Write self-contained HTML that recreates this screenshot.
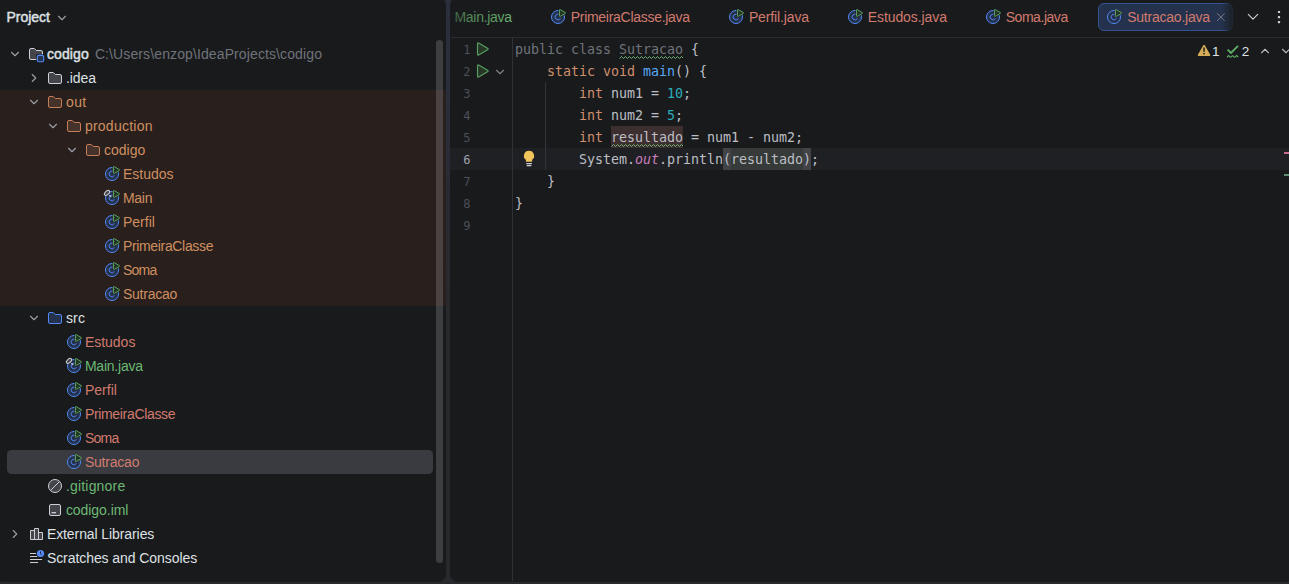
<!DOCTYPE html><html><head><meta charset="utf-8"><title>codigo – Sutracao.java</title><style>

html,body{margin:0;padding:0;background:#27292d;overflow:hidden}
body{width:1289px;height:584px;position:relative;font-family:"Liberation Sans", sans-serif;}
#frame{position:absolute;left:0;top:0;width:1289px;height:584px;overflow:hidden;background:linear-gradient(180deg,#2b2f3e 0px,#2a2e3b 100px,#282a31 220px,#27292d 300px,#27292d 100%)}
.panel{position:absolute;background:#191a1c;border-radius:8px}
.ic{position:absolute;overflow:visible}
.t{position:absolute;white-space:pre;line-height:0;height:0;}
.ui{font-family:"Liberation Sans", sans-serif;font-size:14px;}
.b{font-weight:normal;font-size:14px;-webkit-text-stroke:0.45px currentColor}
.mono{font-family:"DejaVu Sans Mono", "Liberation Mono", monospace;font-size:13.33px;letter-spacing:-0.025px}
.abs{position:absolute}

</style></head><body><div id="frame">
<div class="panel" id="left" style="left:-4px;top:-3px;width:450px;height:584.5px"></div>
<div class="panel" id="editor" style="left:450px;top:-3px;width:843px;height:584.5px"></div>
<div class="abs" style="left:0;top:90px;width:446px;height:216px;background:#291f1d"></div>
<div class="abs" style="left:7px;top:450px;width:426px;height:24px;border-radius:4.5px;background:#393b40"></div>
<div class="abs" style="left:436px;top:40px;width:7px;height:523px;border-radius:3.5px;background:rgba(255,255,255,0.16)"></div>
<span class="t ui b" id="t1" style="left:6.4px;top:17.15px;color:#dfe1e5;letter-spacing:0.003px;">Project</span>
<svg class="ic" style="left:54px;top:9.5px" width="16" height="16" viewBox="0 0 16 16"><path d="M4.5 6.25 L8 9.75 L11.5 6.25" fill="none" stroke="#9da0a8" stroke-width="1.1" stroke-linecap="round" stroke-linejoin="round"/></svg>
<svg class="ic" style="left:7px;top:46px" width="16" height="16" viewBox="0 0 16 16"><path d="M4.5 6.25 L8 9.75 L11.5 6.25" fill="none" stroke="#9da0a8" stroke-width="1.1" stroke-linecap="round" stroke-linejoin="round"/></svg><svg class="ic" style="left:28px;top:46px" width="18" height="18" viewBox="0 0 18 18"><path d="M8.1 4.35 L8.25 4.5 H13 A1.5 1.5 0 0 1 14.5 6 V12 A1.5 1.5 0 0 1 13 13.5 H3 A1.5 1.5 0 0 1 1.5 12 V4 A1.5 1.5 0 0 1 3 2.5 H6.1 Q6.3 2.5 6.48 2.65 Z" fill="#43454a" stroke="#ced0d6"/><rect x="8.2" y="8.3" width="9" height="9" fill="#191a1c"/><rect x="9.3" y="9.4" width="6.4" height="6.4" rx="1.6" fill="#25324d" stroke="#548af7" stroke-width="1.1"/></svg><span class="t ui b" id="t2" style="left:46.9px;top:54.15px;color:#dfe1e5;letter-spacing:0.117px;">codigo</span>
<span class="t ui" id="t3" style="left:94.9px;top:54.15px;color:#6f737a;letter-spacing:0.112px;">C:\Users\enzop\IdeaProjects\codigo</span>
<svg class="ic" style="left:26px;top:70px" width="16" height="16" viewBox="0 0 16 16"><path d="M6.25 4.5 L9.75 8 L6.25 11.5" fill="none" stroke="#9da0a8" stroke-width="1.1" stroke-linecap="round" stroke-linejoin="round"/></svg><svg class="ic" style="left:47px;top:70px" width="16" height="16" viewBox="0 0 16 16"><path d="M8.1 4.35 L8.25 4.5 H13 A1.5 1.5 0 0 1 14.5 6 V12 A1.5 1.5 0 0 1 13 13.5 H3 A1.5 1.5 0 0 1 1.5 12 V4 A1.5 1.5 0 0 1 3 2.5 H6.1 Q6.3 2.5 6.48 2.65 Z" fill="#43454a" stroke="#ced0d6"/></svg><span class="t ui" id="t4" style="left:65.9px;top:78.15px;color:#dfe1e5;letter-spacing:-0.06px;">.idea</span>
<svg class="ic" style="left:26px;top:94px" width="16" height="16" viewBox="0 0 16 16"><path d="M4.5 6.25 L8 9.75 L11.5 6.25" fill="none" stroke="#9da0a8" stroke-width="1.1" stroke-linecap="round" stroke-linejoin="round"/></svg><svg class="ic" style="left:47px;top:94px" width="16" height="16" viewBox="0 0 16 16"><path d="M8.1 4.35 L8.25 4.5 H13 A1.5 1.5 0 0 1 14.5 6 V12 A1.5 1.5 0 0 1 13 13.5 H3 A1.5 1.5 0 0 1 1.5 12 V4 A1.5 1.5 0 0 1 3 2.5 H6.1 Q6.3 2.5 6.48 2.65 Z" fill="#45322b" stroke="#c77d55"/></svg><span class="t ui" id="t5" style="left:65.9px;top:102.15px;color:#cf8f60;letter-spacing:0.455px;">out</span>
<svg class="ic" style="left:45px;top:118px" width="16" height="16" viewBox="0 0 16 16"><path d="M4.5 6.25 L8 9.75 L11.5 6.25" fill="none" stroke="#9da0a8" stroke-width="1.1" stroke-linecap="round" stroke-linejoin="round"/></svg><svg class="ic" style="left:66px;top:118px" width="16" height="16" viewBox="0 0 16 16"><path d="M8.1 4.35 L8.25 4.5 H13 A1.5 1.5 0 0 1 14.5 6 V12 A1.5 1.5 0 0 1 13 13.5 H3 A1.5 1.5 0 0 1 1.5 12 V4 A1.5 1.5 0 0 1 3 2.5 H6.1 Q6.3 2.5 6.48 2.65 Z" fill="#45322b" stroke="#c77d55"/></svg><span class="t ui" id="t6" style="left:84.9px;top:126.15px;color:#cf8f60;letter-spacing:0.244px;">production</span>
<svg class="ic" style="left:64px;top:142px" width="16" height="16" viewBox="0 0 16 16"><path d="M4.5 6.25 L8 9.75 L11.5 6.25" fill="none" stroke="#9da0a8" stroke-width="1.1" stroke-linecap="round" stroke-linejoin="round"/></svg><svg class="ic" style="left:85px;top:142px" width="16" height="16" viewBox="0 0 16 16"><path d="M8.1 4.35 L8.25 4.5 H13 A1.5 1.5 0 0 1 14.5 6 V12 A1.5 1.5 0 0 1 13 13.5 H3 A1.5 1.5 0 0 1 1.5 12 V4 A1.5 1.5 0 0 1 3 2.5 H6.1 Q6.3 2.5 6.48 2.65 Z" fill="#45322b" stroke="#c77d55"/></svg><span class="t ui" id="t7" style="left:103.9px;top:150.15px;color:#cf8f60;letter-spacing:0.044px;">codigo</span>
<svg class="ic" style="left:102px;top:164px" width="20" height="20" viewBox="-2 -2 20 20"><circle cx="8" cy="8" r="6.5" fill="#25324d" stroke="#548af7"/><path d="M10.2 9.8 A2.85 2.85 0 1 1 10.2 6.2" fill="none" stroke="#548af7" stroke-width="0.9" stroke-linecap="round"/><path d="M9.5 1.1 Q9.5 0.2 10.3 0.65 L15.35 3.55 Q16.1 4 15.35 4.45 L10.3 7.35 Q9.5 7.8 9.5 6.9 Z" fill="#291f1d" stroke="#291f1d" stroke-width="1.9" stroke-linejoin="round"/><path d="M9.5 1.1 Q9.5 0.2 10.3 0.65 L15.35 3.55 Q16.1 4 15.35 4.45 L10.3 7.35 Q9.5 7.8 9.5 6.9 Z" fill="#253627" stroke="#5a9e60" stroke-width="1" stroke-linejoin="round"/></svg><span class="t ui" id="t8" style="left:122.9px;top:174.15px;color:#cf8f60;letter-spacing:0.015px;">Estudos</span>
<svg class="ic" style="left:102px;top:188px" width="20" height="20" viewBox="-2 -2 20 20"><circle cx="8" cy="8" r="6.5" fill="#25324d" stroke="#548af7"/><path d="M10.2 9.8 A2.85 2.85 0 1 1 10.2 6.2" fill="none" stroke="#548af7" stroke-width="0.9" stroke-linecap="round"/><path d="M9.5 1.1 Q9.5 0.2 10.3 0.65 L15.35 3.55 Q16.1 4 15.35 4.45 L10.3 7.35 Q9.5 7.8 9.5 6.9 Z" fill="#291f1d" stroke="#291f1d" stroke-width="1.9" stroke-linejoin="round"/><path d="M9.5 1.1 Q9.5 0.2 10.3 0.65 L15.35 3.55 Q16.1 4 15.35 4.45 L10.3 7.35 Q9.5 7.8 9.5 6.9 Z" fill="#253627" stroke="#5a9e60" stroke-width="1" stroke-linejoin="round"/><ellipse cx="3" cy="2.9" rx="3.1" ry="1.75" transform="rotate(-42 3 2.9)" fill="#43454a" stroke="#ced0d6" stroke-width="1"/><path d="M5.7 5.5 L6.9 6.7" stroke="#ced0d6" stroke-width="1.1" stroke-linecap="round"/></svg><span class="t ui" id="t9" style="left:122.9px;top:198.15px;color:#cf8f60;letter-spacing:-0.271px;">Main</span>
<svg class="ic" style="left:102px;top:212px" width="20" height="20" viewBox="-2 -2 20 20"><circle cx="8" cy="8" r="6.5" fill="#25324d" stroke="#548af7"/><path d="M10.2 9.8 A2.85 2.85 0 1 1 10.2 6.2" fill="none" stroke="#548af7" stroke-width="0.9" stroke-linecap="round"/><path d="M9.5 1.1 Q9.5 0.2 10.3 0.65 L15.35 3.55 Q16.1 4 15.35 4.45 L10.3 7.35 Q9.5 7.8 9.5 6.9 Z" fill="#291f1d" stroke="#291f1d" stroke-width="1.9" stroke-linejoin="round"/><path d="M9.5 1.1 Q9.5 0.2 10.3 0.65 L15.35 3.55 Q16.1 4 15.35 4.45 L10.3 7.35 Q9.5 7.8 9.5 6.9 Z" fill="#253627" stroke="#5a9e60" stroke-width="1" stroke-linejoin="round"/></svg><span class="t ui" id="t10" style="left:122.9px;top:222.15px;color:#cf8f60;letter-spacing:0.019px;">Perfil</span>
<svg class="ic" style="left:102px;top:236px" width="20" height="20" viewBox="-2 -2 20 20"><circle cx="8" cy="8" r="6.5" fill="#25324d" stroke="#548af7"/><path d="M10.2 9.8 A2.85 2.85 0 1 1 10.2 6.2" fill="none" stroke="#548af7" stroke-width="0.9" stroke-linecap="round"/><path d="M9.5 1.1 Q9.5 0.2 10.3 0.65 L15.35 3.55 Q16.1 4 15.35 4.45 L10.3 7.35 Q9.5 7.8 9.5 6.9 Z" fill="#291f1d" stroke="#291f1d" stroke-width="1.9" stroke-linejoin="round"/><path d="M9.5 1.1 Q9.5 0.2 10.3 0.65 L15.35 3.55 Q16.1 4 15.35 4.45 L10.3 7.35 Q9.5 7.8 9.5 6.9 Z" fill="#253627" stroke="#5a9e60" stroke-width="1" stroke-linejoin="round"/></svg><span class="t ui" id="t11" style="left:122.9px;top:246.15px;color:#cf8f60;letter-spacing:-0.334px;">PrimeiraClasse</span>
<svg class="ic" style="left:102px;top:260px" width="20" height="20" viewBox="-2 -2 20 20"><circle cx="8" cy="8" r="6.5" fill="#25324d" stroke="#548af7"/><path d="M10.2 9.8 A2.85 2.85 0 1 1 10.2 6.2" fill="none" stroke="#548af7" stroke-width="0.9" stroke-linecap="round"/><path d="M9.5 1.1 Q9.5 0.2 10.3 0.65 L15.35 3.55 Q16.1 4 15.35 4.45 L10.3 7.35 Q9.5 7.8 9.5 6.9 Z" fill="#291f1d" stroke="#291f1d" stroke-width="1.9" stroke-linejoin="round"/><path d="M9.5 1.1 Q9.5 0.2 10.3 0.65 L15.35 3.55 Q16.1 4 15.35 4.45 L10.3 7.35 Q9.5 7.8 9.5 6.9 Z" fill="#253627" stroke="#5a9e60" stroke-width="1" stroke-linejoin="round"/></svg><span class="t ui" id="t12" style="left:122.9px;top:270.15px;color:#cf8f60;letter-spacing:-0.709px;">Soma</span>
<svg class="ic" style="left:102px;top:284px" width="20" height="20" viewBox="-2 -2 20 20"><circle cx="8" cy="8" r="6.5" fill="#25324d" stroke="#548af7"/><path d="M10.2 9.8 A2.85 2.85 0 1 1 10.2 6.2" fill="none" stroke="#548af7" stroke-width="0.9" stroke-linecap="round"/><path d="M9.5 1.1 Q9.5 0.2 10.3 0.65 L15.35 3.55 Q16.1 4 15.35 4.45 L10.3 7.35 Q9.5 7.8 9.5 6.9 Z" fill="#291f1d" stroke="#291f1d" stroke-width="1.9" stroke-linejoin="round"/><path d="M9.5 1.1 Q9.5 0.2 10.3 0.65 L15.35 3.55 Q16.1 4 15.35 4.45 L10.3 7.35 Q9.5 7.8 9.5 6.9 Z" fill="#253627" stroke="#5a9e60" stroke-width="1" stroke-linejoin="round"/></svg><span class="t ui" id="t13" style="left:122.9px;top:294.15px;color:#cf8f60;letter-spacing:-0.232px;">Sutracao</span>
<svg class="ic" style="left:26px;top:310px" width="16" height="16" viewBox="0 0 16 16"><path d="M4.5 6.25 L8 9.75 L11.5 6.25" fill="none" stroke="#9da0a8" stroke-width="1.1" stroke-linecap="round" stroke-linejoin="round"/></svg><svg class="ic" style="left:47px;top:310px" width="16" height="16" viewBox="0 0 16 16"><path d="M8.1 4.35 L8.25 4.5 H13 A1.5 1.5 0 0 1 14.5 6 V12 A1.5 1.5 0 0 1 13 13.5 H3 A1.5 1.5 0 0 1 1.5 12 V4 A1.5 1.5 0 0 1 3 2.5 H6.1 Q6.3 2.5 6.48 2.65 Z" fill="#25324d" stroke="#548af7"/></svg><span class="t ui" id="t14" style="left:65.9px;top:318.15px;color:#dfe1e5;letter-spacing:0.174px;">src</span>
<svg class="ic" style="left:64px;top:332px" width="20" height="20" viewBox="-2 -2 20 20"><circle cx="8" cy="8" r="6.5" fill="#25324d" stroke="#548af7"/><path d="M10.2 9.8 A2.85 2.85 0 1 1 10.2 6.2" fill="none" stroke="#548af7" stroke-width="0.9" stroke-linecap="round"/><path d="M9.5 1.1 Q9.5 0.2 10.3 0.65 L15.35 3.55 Q16.1 4 15.35 4.45 L10.3 7.35 Q9.5 7.8 9.5 6.9 Z" fill="#191a1c" stroke="#191a1c" stroke-width="1.9" stroke-linejoin="round"/><path d="M9.5 1.1 Q9.5 0.2 10.3 0.65 L15.35 3.55 Q16.1 4 15.35 4.45 L10.3 7.35 Q9.5 7.8 9.5 6.9 Z" fill="#253627" stroke="#5a9e60" stroke-width="1" stroke-linejoin="round"/></svg><span class="t ui" id="t15" style="left:84.9px;top:342.15px;color:#d17b6f;letter-spacing:-0.014px;">Estudos</span>
<svg class="ic" style="left:64px;top:356px" width="20" height="20" viewBox="-2 -2 20 20"><circle cx="8" cy="8" r="6.5" fill="#25324d" stroke="#548af7"/><path d="M10.2 9.8 A2.85 2.85 0 1 1 10.2 6.2" fill="none" stroke="#548af7" stroke-width="0.9" stroke-linecap="round"/><path d="M9.5 1.1 Q9.5 0.2 10.3 0.65 L15.35 3.55 Q16.1 4 15.35 4.45 L10.3 7.35 Q9.5 7.8 9.5 6.9 Z" fill="#191a1c" stroke="#191a1c" stroke-width="1.9" stroke-linejoin="round"/><path d="M9.5 1.1 Q9.5 0.2 10.3 0.65 L15.35 3.55 Q16.1 4 15.35 4.45 L10.3 7.35 Q9.5 7.8 9.5 6.9 Z" fill="#253627" stroke="#5a9e60" stroke-width="1" stroke-linejoin="round"/><ellipse cx="3" cy="2.9" rx="3.1" ry="1.75" transform="rotate(-42 3 2.9)" fill="#43454a" stroke="#ced0d6" stroke-width="1"/><path d="M5.7 5.5 L6.9 6.7" stroke="#ced0d6" stroke-width="1.1" stroke-linecap="round"/></svg><span class="t ui" id="t16" style="left:84.9px;top:366.15px;color:#6cb873;letter-spacing:-0.226px;">Main.java</span>
<svg class="ic" style="left:64px;top:380px" width="20" height="20" viewBox="-2 -2 20 20"><circle cx="8" cy="8" r="6.5" fill="#25324d" stroke="#548af7"/><path d="M10.2 9.8 A2.85 2.85 0 1 1 10.2 6.2" fill="none" stroke="#548af7" stroke-width="0.9" stroke-linecap="round"/><path d="M9.5 1.1 Q9.5 0.2 10.3 0.65 L15.35 3.55 Q16.1 4 15.35 4.45 L10.3 7.35 Q9.5 7.8 9.5 6.9 Z" fill="#191a1c" stroke="#191a1c" stroke-width="1.9" stroke-linejoin="round"/><path d="M9.5 1.1 Q9.5 0.2 10.3 0.65 L15.35 3.55 Q16.1 4 15.35 4.45 L10.3 7.35 Q9.5 7.8 9.5 6.9 Z" fill="#253627" stroke="#5a9e60" stroke-width="1" stroke-linejoin="round"/></svg><span class="t ui" id="t17" style="left:84.9px;top:390.15px;color:#d17b6f;letter-spacing:0.036px;">Perfil</span>
<svg class="ic" style="left:64px;top:404px" width="20" height="20" viewBox="-2 -2 20 20"><circle cx="8" cy="8" r="6.5" fill="#25324d" stroke="#548af7"/><path d="M10.2 9.8 A2.85 2.85 0 1 1 10.2 6.2" fill="none" stroke="#548af7" stroke-width="0.9" stroke-linecap="round"/><path d="M9.5 1.1 Q9.5 0.2 10.3 0.65 L15.35 3.55 Q16.1 4 15.35 4.45 L10.3 7.35 Q9.5 7.8 9.5 6.9 Z" fill="#191a1c" stroke="#191a1c" stroke-width="1.9" stroke-linejoin="round"/><path d="M9.5 1.1 Q9.5 0.2 10.3 0.65 L15.35 3.55 Q16.1 4 15.35 4.45 L10.3 7.35 Q9.5 7.8 9.5 6.9 Z" fill="#253627" stroke="#5a9e60" stroke-width="1" stroke-linejoin="round"/></svg><span class="t ui" id="t18" style="left:84.9px;top:414.15px;color:#d17b6f;letter-spacing:-0.328px;">PrimeiraClasse</span>
<svg class="ic" style="left:64px;top:428px" width="20" height="20" viewBox="-2 -2 20 20"><circle cx="8" cy="8" r="6.5" fill="#25324d" stroke="#548af7"/><path d="M10.2 9.8 A2.85 2.85 0 1 1 10.2 6.2" fill="none" stroke="#548af7" stroke-width="0.9" stroke-linecap="round"/><path d="M9.5 1.1 Q9.5 0.2 10.3 0.65 L15.35 3.55 Q16.1 4 15.35 4.45 L10.3 7.35 Q9.5 7.8 9.5 6.9 Z" fill="#191a1c" stroke="#191a1c" stroke-width="1.9" stroke-linejoin="round"/><path d="M9.5 1.1 Q9.5 0.2 10.3 0.65 L15.35 3.55 Q16.1 4 15.35 4.45 L10.3 7.35 Q9.5 7.8 9.5 6.9 Z" fill="#253627" stroke="#5a9e60" stroke-width="1" stroke-linejoin="round"/></svg><span class="t ui" id="t19" style="left:84.9px;top:438.15px;color:#d17b6f;letter-spacing:-0.735px;">Soma</span>
<svg class="ic" style="left:64px;top:452px" width="20" height="20" viewBox="-2 -2 20 20"><circle cx="8" cy="8" r="6.5" fill="#25324d" stroke="#548af7"/><path d="M10.2 9.8 A2.85 2.85 0 1 1 10.2 6.2" fill="none" stroke="#548af7" stroke-width="0.9" stroke-linecap="round"/><path d="M9.5 1.1 Q9.5 0.2 10.3 0.65 L15.35 3.55 Q16.1 4 15.35 4.45 L10.3 7.35 Q9.5 7.8 9.5 6.9 Z" fill="#393b40" stroke="#393b40" stroke-width="1.9" stroke-linejoin="round"/><path d="M9.5 1.1 Q9.5 0.2 10.3 0.65 L15.35 3.55 Q16.1 4 15.35 4.45 L10.3 7.35 Q9.5 7.8 9.5 6.9 Z" fill="#253627" stroke="#5a9e60" stroke-width="1" stroke-linejoin="round"/></svg><span class="t ui" id="t20" style="left:84.9px;top:462.15px;color:#d17b6f;letter-spacing:-0.205px;">Sutracao</span>
<svg class="ic" style="left:47px;top:478px" width="16" height="16" viewBox="0 0 16 16"><circle cx="8" cy="8" r="6.5" fill="#43454a" stroke="#ced0d6"/><path d="M3.6 12.4 L12.4 3.6" stroke="#ced0d6" stroke-width="1"/></svg><span class="t ui" id="t21" style="left:65.9px;top:486.15px;color:#6cb873;letter-spacing:0.19px;">.gitignore</span>
<svg class="ic" style="left:47px;top:502px" width="16" height="16" viewBox="0 0 16 16"><rect x="2.5" y="2.5" width="11" height="11" rx="1.5" fill="#43454a" stroke="#ced0d6"/><path d="M4.6 10.7 H9" stroke="#ced0d6" stroke-width="1.3"/></svg><span class="t ui" id="t22" style="left:65.9px;top:510.15px;color:#6cb873;letter-spacing:-0.056px;">codigo.iml</span>
<svg class="ic" style="left:7px;top:526px" width="16" height="16" viewBox="0 0 16 16"><path d="M6.25 4.5 L9.75 8 L6.25 11.5" fill="none" stroke="#9da0a8" stroke-width="1.1" stroke-linecap="round" stroke-linejoin="round"/></svg><svg class="ic" style="left:28px;top:526px" width="16" height="16" viewBox="0 0 16 16"><path d="M2.5 4.5 H6.5 V13.5 H2.5 Z M6.5 2.5 H10.5 V13.5 H6.5 Z M10.5 6.5 H14.5 V13.5 H10.5 Z" fill="#43454a" stroke="#ced0d6" stroke-linejoin="round"/></svg><span class="t ui" id="t23" style="left:46.9px;top:534.15px;color:#dfe1e5;letter-spacing:-0.088px;">External Libraries</span>
<svg class="ic" style="left:28px;top:549px" width="18" height="18" viewBox="0 0 18 18"><path d="M2 4.5 H8.1 M2 7.5 H9.2 M2 10.5 H14.1 M2 13.5 H10.1" stroke="#ced0d6" stroke-width="1"/><circle cx="12.5" cy="4.5" r="3.6" fill="#548af7"/><path d="M12.5 2.4 V4.7 L13.7 5.7" stroke="#191a1c" stroke-width="0.9" fill="none"/></svg><span class="t ui" id="t24" style="left:46.9px;top:558.15px;color:#dfe1e5;letter-spacing:-0.068px;">Scratches and Consoles</span>
<div class="abs" style="left:451px;top:37px;width:838px;height:1px;background:#2b2d30"></div>
<span class="t ui" id="t25" style="left:454.4px;top:17.15px;color:#6cb873;letter-spacing:-0.273px;">Main.java</span>
<div class="abs" style="left:450px;top:6px;width:72px;height:24px;background:linear-gradient(90deg,rgba(25,26,28,0.6),rgba(25,26,28,0.3) 30%,rgba(25,26,28,0))"></div>
<svg class="ic" style="left:548px;top:7px" width="20" height="20" viewBox="-2 -2 20 20"><circle cx="8" cy="8" r="6.5" fill="#25324d" stroke="#548af7"/><path d="M10.2 9.8 A2.85 2.85 0 1 1 10.2 6.2" fill="none" stroke="#548af7" stroke-width="0.9" stroke-linecap="round"/><path d="M9.5 1.1 Q9.5 0.2 10.3 0.65 L15.35 3.55 Q16.1 4 15.35 4.45 L10.3 7.35 Q9.5 7.8 9.5 6.9 Z" fill="#191a1c" stroke="#191a1c" stroke-width="1.9" stroke-linejoin="round"/><path d="M9.5 1.1 Q9.5 0.2 10.3 0.65 L15.35 3.55 Q16.1 4 15.35 4.45 L10.3 7.35 Q9.5 7.8 9.5 6.9 Z" fill="#253627" stroke="#5a9e60" stroke-width="1" stroke-linejoin="round"/></svg><span class="t ui" id="t26" style="left:570.7px;top:17.15px;color:#d17b6f;letter-spacing:-0.281px;">PrimeiraClasse.java</span>
<svg class="ic" style="left:726px;top:7px" width="20" height="20" viewBox="-2 -2 20 20"><circle cx="8" cy="8" r="6.5" fill="#25324d" stroke="#548af7"/><path d="M10.2 9.8 A2.85 2.85 0 1 1 10.2 6.2" fill="none" stroke="#548af7" stroke-width="0.9" stroke-linecap="round"/><path d="M9.5 1.1 Q9.5 0.2 10.3 0.65 L15.35 3.55 Q16.1 4 15.35 4.45 L10.3 7.35 Q9.5 7.8 9.5 6.9 Z" fill="#191a1c" stroke="#191a1c" stroke-width="1.9" stroke-linejoin="round"/><path d="M9.5 1.1 Q9.5 0.2 10.3 0.65 L15.35 3.55 Q16.1 4 15.35 4.45 L10.3 7.35 Q9.5 7.8 9.5 6.9 Z" fill="#253627" stroke="#5a9e60" stroke-width="1" stroke-linejoin="round"/></svg><span class="t ui" id="t27" style="left:748.9px;top:17.15px;color:#d17b6f;letter-spacing:-0.131px;">Perfil.java</span>
<svg class="ic" style="left:845px;top:7px" width="20" height="20" viewBox="-2 -2 20 20"><circle cx="8" cy="8" r="6.5" fill="#25324d" stroke="#548af7"/><path d="M10.2 9.8 A2.85 2.85 0 1 1 10.2 6.2" fill="none" stroke="#548af7" stroke-width="0.9" stroke-linecap="round"/><path d="M9.5 1.1 Q9.5 0.2 10.3 0.65 L15.35 3.55 Q16.1 4 15.35 4.45 L10.3 7.35 Q9.5 7.8 9.5 6.9 Z" fill="#191a1c" stroke="#191a1c" stroke-width="1.9" stroke-linejoin="round"/><path d="M9.5 1.1 Q9.5 0.2 10.3 0.65 L15.35 3.55 Q16.1 4 15.35 4.45 L10.3 7.35 Q9.5 7.8 9.5 6.9 Z" fill="#253627" stroke="#5a9e60" stroke-width="1" stroke-linejoin="round"/></svg><span class="t ui" id="t28" style="left:867.7px;top:17.15px;color:#d17b6f;letter-spacing:-0.075px;">Estudos.java</span>
<svg class="ic" style="left:983px;top:7px" width="20" height="20" viewBox="-2 -2 20 20"><circle cx="8" cy="8" r="6.5" fill="#25324d" stroke="#548af7"/><path d="M10.2 9.8 A2.85 2.85 0 1 1 10.2 6.2" fill="none" stroke="#548af7" stroke-width="0.9" stroke-linecap="round"/><path d="M9.5 1.1 Q9.5 0.2 10.3 0.65 L15.35 3.55 Q16.1 4 15.35 4.45 L10.3 7.35 Q9.5 7.8 9.5 6.9 Z" fill="#191a1c" stroke="#191a1c" stroke-width="1.9" stroke-linejoin="round"/><path d="M9.5 1.1 Q9.5 0.2 10.3 0.65 L15.35 3.55 Q16.1 4 15.35 4.45 L10.3 7.35 Q9.5 7.8 9.5 6.9 Z" fill="#253627" stroke="#5a9e60" stroke-width="1" stroke-linejoin="round"/></svg><span class="t ui" id="t29" style="left:1005.7px;top:17.15px;color:#d17b6f;letter-spacing:-0.453px;">Soma.java</span>
<div class="abs" style="left:1098px;top:3px;width:134.6px;height:28px;box-sizing:border-box;border-radius:6px;background:#25324d;border:1px solid #35538f"></div>
<svg class="ic" style="left:1104px;top:7px" width="20" height="20" viewBox="-2 -2 20 20"><circle cx="8" cy="8" r="6.5" fill="#25324d" stroke="#548af7"/><path d="M10.2 9.8 A2.85 2.85 0 1 1 10.2 6.2" fill="none" stroke="#548af7" stroke-width="0.9" stroke-linecap="round"/><path d="M9.5 1.1 Q9.5 0.2 10.3 0.65 L15.35 3.55 Q16.1 4 15.35 4.45 L10.3 7.35 Q9.5 7.8 9.5 6.9 Z" fill="#25324d" stroke="#25324d" stroke-width="1.9" stroke-linejoin="round"/><path d="M9.5 1.1 Q9.5 0.2 10.3 0.65 L15.35 3.55 Q16.1 4 15.35 4.45 L10.3 7.35 Q9.5 7.8 9.5 6.9 Z" fill="#253627" stroke="#5a9e60" stroke-width="1" stroke-linejoin="round"/></svg><span class="t ui" id="t30" style="left:1127.2px;top:17.15px;color:#d17b6f;letter-spacing:-0.225px;">Sutracao.java</span>
<svg class="ic" style="left:1213px;top:9px" width="16" height="16" viewBox="0 0 16 16"><path d="M4.4 4.6 L11.4 11.6 M11.4 4.6 L4.4 11.6" stroke="#7d8189" stroke-width="0.95" stroke-linecap="round"/></svg>
<div class="abs" style="left:1222px;top:3px;width:11px;height:28px;background:linear-gradient(90deg,rgba(25,26,28,0),rgba(25,26,28,0.8))"></div>
<svg class="ic" style="left:1245px;top:9px" width="16" height="16" viewBox="0 0 16 16"><path d="M3.3 5.4 L8 10.2 L12.7 5.4" fill="none" stroke="#ced0d6" stroke-width="1.15" stroke-linecap="round" stroke-linejoin="round"/></svg>
<svg class="ic" style="left:1271px;top:9px" width="16" height="16" viewBox="0 0 16 16"><rect x="6.9" y="1.9" width="2.2" height="2.2" rx="0.4" fill="#ced0d6"/><rect x="6.9" y="6.95" width="2.2" height="2.2" rx="0.4" fill="#ced0d6"/><rect x="6.9" y="12" width="2.2" height="2.2" rx="0.4" fill="#ced0d6"/></svg>
<div class="abs" style="left:450px;top:148px;width:839px;height:22px;background:#1f2023"></div>
<div class="abs" style="left:512px;top:38px;width:1px;height:543px;background:#2f3135"></div>
<div class="abs" style="left:545px;top:82px;width:1px;height:88px;background:#313438"></div>
<div class="abs" style="left:611px;top:126px;width:72px;height:22px;background:#3d2e30"></div>
<div class="abs" style="left:723px;top:148px;width:88px;height:22px;background:#414347"></div>
<div class="abs" style="left:731px;top:148px;width:72px;height:22px;background:#363a38"></div>
<span class="t mono" style="left:463.2px;top:49.85px;color:#4b5059;font-size:12px">1</span>
<span class="t mono" style="left:463.2px;top:71.85px;color:#4b5059;font-size:12px">2</span>
<span class="t mono" style="left:463.2px;top:93.85px;color:#4b5059;font-size:12px">3</span>
<span class="t mono" style="left:463.2px;top:115.85px;color:#4b5059;font-size:12px">4</span>
<span class="t mono" style="left:463.2px;top:137.85px;color:#4b5059;font-size:12px">5</span>
<span class="t mono" style="left:463.2px;top:159.85px;color:#a1a3ab;font-size:12px">6</span>
<span class="t mono" style="left:463.2px;top:181.85px;color:#4b5059;font-size:12px">7</span>
<span class="t mono" style="left:463.2px;top:203.85px;color:#4b5059;font-size:12px">8</span>
<span class="t mono" style="left:463.2px;top:225.85px;color:#4b5059;font-size:12px">9</span>
<svg class="ic" style="left:475px;top:41px" width="16" height="16" viewBox="0 0 16 16"><path d="M2.5 2.7 Q2.5 1.4 3.6 2.05 L12.5 7.25 Q13.8 8 12.5 8.75 L3.6 13.95 Q2.5 14.6 2.5 13.3 Z" fill="#253627" stroke="#5a9e60" stroke-width="1.15" stroke-linejoin="round"/></svg>
<svg class="ic" style="left:475px;top:63px" width="16" height="16" viewBox="0 0 16 16"><path d="M2.5 2.7 Q2.5 1.4 3.6 2.05 L12.5 7.25 Q13.8 8 12.5 8.75 L3.6 13.95 Q2.5 14.6 2.5 13.3 Z" fill="#253627" stroke="#5a9e60" stroke-width="1.15" stroke-linejoin="round"/></svg>
<svg class="ic" style="left:491.5px;top:63.5px" width="16" height="16" viewBox="0 0 16 16"><path d="M4.5 6.25 L8 9.75 L11.5 6.25" fill="none" stroke="#7f838a" stroke-width="1.1" stroke-linecap="round" stroke-linejoin="round"/></svg>
<svg class="ic" style="left:521px;top:150px" width="16" height="17" viewBox="0 0 16 17"><path d="M8 0.7 A5.1 5.1 0 0 0 4.9 9.85 V11.8 H11.1 V9.85 A5.1 5.1 0 0 0 8 0.7 Z" fill="#f2c55c"/><path d="M5.3 13.6 H10.9 M5.7 15.6 H10.3" stroke="#ced0d6" stroke-width="1.1"/></svg>
<span class="t mono" style="left:515px;top:50.39px;color:#bcbec4"><span style="color:#6f737a;">public class Sutracao</span> {</span>
<span class="t mono" style="left:515px;top:72.39px;color:#bcbec4">    <span style="color:#cf8e6d;">static void</span> <span style="color:#56a8f5;">main</span>() {</span>
<span class="t mono" style="left:515px;top:94.39px;color:#bcbec4">        <span style="color:#cf8e6d;">int</span> num1 = <span style="color:#2aacb8;">10</span>;</span>
<span class="t mono" style="left:515px;top:116.39px;color:#bcbec4">        <span style="color:#cf8e6d;">int</span> num2 = <span style="color:#2aacb8;">5</span>;</span>
<span class="t mono" style="left:515px;top:138.39px;color:#bcbec4">        <span style="color:#cf8e6d;">int</span> resultado = num1 - num2;</span>
<span class="t mono" style="left:515px;top:160.39px;color:#bcbec4">        System.<span style="color:#c77dbb;font-style:italic;">out</span>.println(resultado);</span>
<span class="t mono" style="left:515px;top:182.39px;color:#bcbec4">    }</span>
<span class="t mono" style="left:515px;top:204.39px;color:#bcbec4">}</span>
<svg class="ic" style="left:619px;top:56px;overflow:hidden" width="64" height="4" viewBox="0 0 64 4"><path d="M0.5 2.5 L2.5 0.5 L4.5 2.5 L6.5 0.5 L8.5 2.5 L10.5 0.5 L12.5 2.5 L14.5 0.5 L16.5 2.5 L18.5 0.5 L20.5 2.5 L22.5 0.5 L24.5 2.5 L26.5 0.5 L28.5 2.5 L30.5 0.5 L32.5 2.5 L34.5 0.5 L36.5 2.5 L38.5 0.5 L40.5 2.5 L42.5 0.5 L44.5 2.5 L46.5 0.5 L48.5 2.5 L50.5 0.5 L52.5 2.5 L54.5 0.5 L56.5 2.5 L58.5 0.5 L60.5 2.5 L62.5 0.5 L64.5 2.5" fill="none" stroke="#6cb574" stroke-width="1" stroke-linejoin="miter"/></svg>
<svg class="ic" style="left:611px;top:144px;overflow:hidden" width="72" height="4" viewBox="0 0 72 4"><path d="M0.5 2.5 L2.5 0.5 L4.5 2.5 L6.5 0.5 L8.5 2.5 L10.5 0.5 L12.5 2.5 L14.5 0.5 L16.5 2.5 L18.5 0.5 L20.5 2.5 L22.5 0.5 L24.5 2.5 L26.5 0.5 L28.5 2.5 L30.5 0.5 L32.5 2.5 L34.5 0.5 L36.5 2.5 L38.5 0.5 L40.5 2.5 L42.5 0.5 L44.5 2.5 L46.5 0.5 L48.5 2.5 L50.5 0.5 L52.5 2.5 L54.5 0.5 L56.5 2.5 L58.5 0.5 L60.5 2.5 L62.5 0.5 L64.5 2.5 L66.5 0.5 L68.5 2.5 L70.5 0.5 L72.5 2.5" fill="none" stroke="#6cb574" stroke-width="1" stroke-linejoin="miter"/></svg>
<svg class="ic" style="left:1197px;top:43px" width="14" height="14" viewBox="0 0 14 14"><path d="M7.05 2.7 L12.5 12.1 H1.6 Z" fill="#d6ae58" stroke="#d6ae58" stroke-width="1.7" stroke-linejoin="round"/><path d="M7.05 4.6 V8.7" stroke="#1e1f22" stroke-width="1.5"/><rect x="6.3" y="9.9" width="1.5" height="1.5" fill="#1e1f22"/></svg>
<span class="t ui" id="t31" style="left:1212.0px;top:52.32px;color:#dfe1e5;letter-spacing:-1.218px;font-size:13.5px;">1</span>
<svg class="ic" style="left:1226px;top:43px" width="14" height="16" viewBox="0 0 14 16"><path d="M1.6 6.6 L5 10 L12 2.9" fill="none" stroke="#5fad65" stroke-width="1.9"/><path d="M1 14.3 L2.6 12.6 L4.6 14.3 L6.6 12.6 L8.6 14.3 L10.6 12.6 L12.2 14" fill="none" stroke="#5fad65" stroke-width="1.1"/></svg>
<span class="t ui" id="t32" style="left:1241.8px;top:52.32px;color:#dfe1e5;letter-spacing:0.191px;font-size:13.5px;">2</span>
<svg class="ic" style="left:1257px;top:43px" width="16" height="16" viewBox="0 0 16 16"><path d="M4.5 9.75 L8 6.25 L11.5 9.75" fill="none" stroke="#b4b8bf" stroke-width="1.1" stroke-linecap="round" stroke-linejoin="round"/></svg>
<svg class="ic" style="left:1278px;top:43px" width="16" height="16" viewBox="0 0 16 16"><path d="M4.5 6.25 L8 9.75 L11.5 6.25" fill="none" stroke="#b4b8bf" stroke-width="1.1" stroke-linecap="round" stroke-linejoin="round"/></svg>
<div class="abs" style="left:1284px;top:152px;width:5px;height:2px;background:#c56b94"></div>
<div class="abs" style="left:1284px;top:174px;width:5px;height:2px;background:#5f8f73"></div>
</div></body></html>
